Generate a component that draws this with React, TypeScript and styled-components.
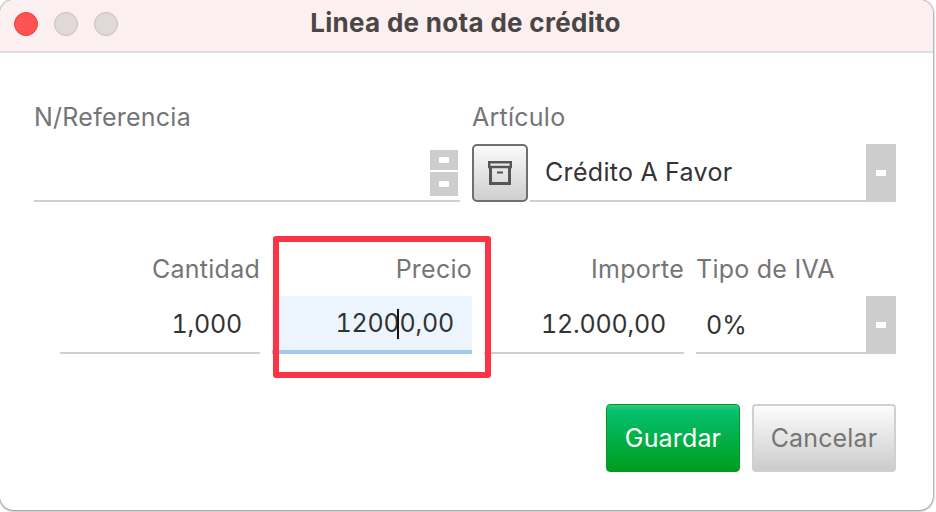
import React from "react";
import styled, { createGlobalStyle } from "styled-components";

const Global = createGlobalStyle`
  html, body { margin: 0; padding: 0; background: #fff; width: 936px; height: 512px; overflow: hidden; }
  * { box-sizing: border-box; }
`;

const Window = styled.div`
  position: relative;
  width: 933px;
  height: 510px;
  background: #fff;
  border-radius: 14px;
  overflow: hidden;
  box-shadow: 0 0 2px 1px #a9a9a9, 0 1px 2px #8f8f8f;
  font-family: Inter, Roboto, "Liberation Sans", sans-serif;
`;

const TitleBar = styled.header`
  height: 53px;
  background: #fbf0ef;
  border-bottom: 2px solid #dedede;
  display: flex;
  align-items: center;
  padding: 0 0 3px 14px;
  position: relative;
`;

const Lights = styled.div`
  display: flex;
  gap: 16px;
`;

const Light = styled.span<{ $active?: boolean }>`
  width: 24px;
  height: 24px;
  border-radius: 50%;
  background: ${(p) => (p.$active ? "#fe5350" : "#e1d9d8")};
  border: 1px solid ${(p) => (p.$active ? "#e8413e" : "#c6bdbc")};
`;

const Title = styled.h1`
  flex: 1;
  margin: 0 0 3px -120px;
  text-align: center;
  font-size: 26px;
  line-height: 30px;
  font-weight: 700;
  color: #4b4646;
  letter-spacing: 0.3px;
`;

const Body = styled.main`
  padding: 49px 37px 0 34px;
  display: flex;
  flex-direction: column;
  gap: 50px;
`;

const TopRow = styled.div`
  display: grid;
  grid-template-columns: 426px 424px;
  column-gap: 12px;
  margin-bottom: 2px;
`;

const BottomRow = styled.div`
  display: grid;
  grid-template-columns: repeat(4, 200px);
  column-gap: 12px;
  margin-left: 26px;
`;

const Field = styled.div`
  display: flex;
  flex-direction: column;
`;

const Label = styled.label<{ $right?: boolean }>`
  height: 30px;
  line-height: 30px;
  font-size: 25px;
  letter-spacing: 0.25px;
  color: #757575;
  white-space: nowrap;
  margin-bottom: 12px;
  text-align: ${(p) => (p.$right ? "right" : "left")};
`;

const Input = styled.div<{ $focused?: boolean }>`
  position: relative;
  height: 58px;
  display: flex;
  align-items: center;
  justify-content: flex-end;
  padding: 0 18px 0 0;
  font-size: 25px;
  font-variant-numeric: tabular-nums;
  letter-spacing: -0.22px;
  color: #333;
  background: ${(p) => (p.$focused ? "#ecf5fe" : "transparent")};
  border-bottom: ${(p) => (p.$focused ? "4px solid #a3c8f0" : "2px solid #cfcfcf")};
`;

const Caret = styled.i`
  display: inline-block;
  width: 2px;
  height: 30px;
  margin: 0 1px 0 -3px;
  background: #111;
  vertical-align: -7px;
`;

const Spinner = styled.div`
  position: absolute;
  right: 2px;
  top: 6px;
  display: flex;
  flex-direction: column;
  gap: 2px;
`;

const SpinButton = styled.span<{ $large?: boolean }>`
  width: 28px;
  height: ${(p) => (p.$large ? "24px" : "20px")};
  background: #cdcdcd;
  display: flex;
  align-items: center;
  justify-content: center;
`;

const Dash = styled.span`
  width: 10px;
  height: 6px;
  background: #fff;
`;

const ComboRow = styled.div`
  display: flex;
  gap: 2px;
  height: 58px;
`;

const IconButton = styled.button`
  width: 56px;
  height: 58px;
  padding: 0;
  border: 2px solid #6f6f6f;
  border-radius: 5px;
  background: linear-gradient(#fafafa, #cfcfcf);
  display: flex;
  align-items: center;
  justify-content: center;
`;

const Combo = styled.div<{ $narrow?: boolean }>`
  flex: 1;
  height: 58px;
  display: flex;
  align-items: center;
  border-bottom: 2px solid #cfcfcf;
  font-size: 25px;
  letter-spacing: ${(p) => (p.$narrow ? "0" : "0.33px")};
  font-variant-numeric: tabular-nums;
  color: #333;
  padding-left: ${(p) => (p.$narrow ? "10px" : "15px")};
  position: relative;
`;

const ComboText = styled.span<{ $low?: boolean }>`
  flex: 1;
  padding-top: ${(p) => (p.$low ? "2px" : "0")};
`;

const ComboArrow = styled.span`
  width: 30px;
  align-self: stretch;
  margin-bottom: -2px;
  background: #cdcdcd;
  display: flex;
  align-items: center;
  justify-content: center;
`;

const Footer = styled.footer`
  display: flex;
  justify-content: flex-end;
  gap: 12px;
`;

const ActionButton = styled.button<{ $primary?: boolean }>`
  height: 68px;
  width: ${(p) => (p.$primary ? "134px" : "144px")};
  border-radius: 4px;
  font-family: inherit;
  font-size: 25px;
  letter-spacing: 0.15px;
  padding: 0;
  color: ${(p) => (p.$primary ? "#fff" : "#757575")};
  border: ${(p) => (p.$primary ? "1px solid #049a1f" : "2px solid #d0d0d0")};
  background: ${(p) =>
    p.$primary
      ? "linear-gradient(#2fca80 0, #04c06f 10%, #009c1c 100%)"
      : "linear-gradient(#fdfdfd, #cccccc)"};
`;

const Annotation = styled.div`
  position: absolute;
  left: 273px;
  top: 236px;
  width: 218px;
  height: 142px;
  border: 6px solid #fa3345;
  border-radius: 3px;
  pointer-events: none;
`;

const ArchiveIcon = () => (
  <svg width="24" height="24" viewBox="0 0 24 24" fill="none" stroke="#555" strokeWidth="3">
    <path d="M1.2 1.2h21.6v4.8H1.2z" strokeWidth="2.4" />
    <path d="M2.5 6v16.5h19V6" />
    <path d="M9 11.5h6" strokeWidth="2" />
  </svg>
);

export default function App() {
  return (
    <>
      <Global />
      <Window>
        <TitleBar>
          <Lights>
            <Light $active />
            <Light />
            <Light />
          </Lights>
          <Title>Linea de nota de crédito</Title>
        </TitleBar>
        <Body>
          <TopRow>
            <Field>
              <Label>N/Referencia</Label>
              <Input>
                <Spinner>
                  <SpinButton><Dash /></SpinButton>
                  <SpinButton $large><Dash /></SpinButton>
                </Spinner>
              </Input>
            </Field>
            <Field>
              <Label>Artículo</Label>
              <ComboRow>
                <IconButton><ArchiveIcon /></IconButton>
                <Combo>
                  <ComboText>Crédito A Favor</ComboText>
                  <ComboArrow><Dash /></ComboArrow>
                </Combo>
              </ComboRow>
            </Field>
          </TopRow>
          <BottomRow>
            <Field>
              <Label $right>Cantidad</Label>
              <Input>1,000</Input>
            </Field>
            <Field>
              <Label $right>Precio</Label>
              <Input $focused>
                <span>1200<Caret />0,00</span>
              </Input>
            </Field>
            <Field>
              <Label $right>Importe</Label>
              <Input>12.000,00</Input>
            </Field>
            <Field>
              <Label>Tipo de IVA</Label>
              <Combo $narrow>
                <ComboText $low>0%</ComboText>
                <ComboArrow><Dash /></ComboArrow>
              </Combo>
            </Field>
          </BottomRow>
          <Footer>
            <ActionButton $primary>Guardar</ActionButton>
            <ActionButton>Cancelar</ActionButton>
          </Footer>
        </Body>
        <Annotation />
      </Window>
    </>
  );
}
